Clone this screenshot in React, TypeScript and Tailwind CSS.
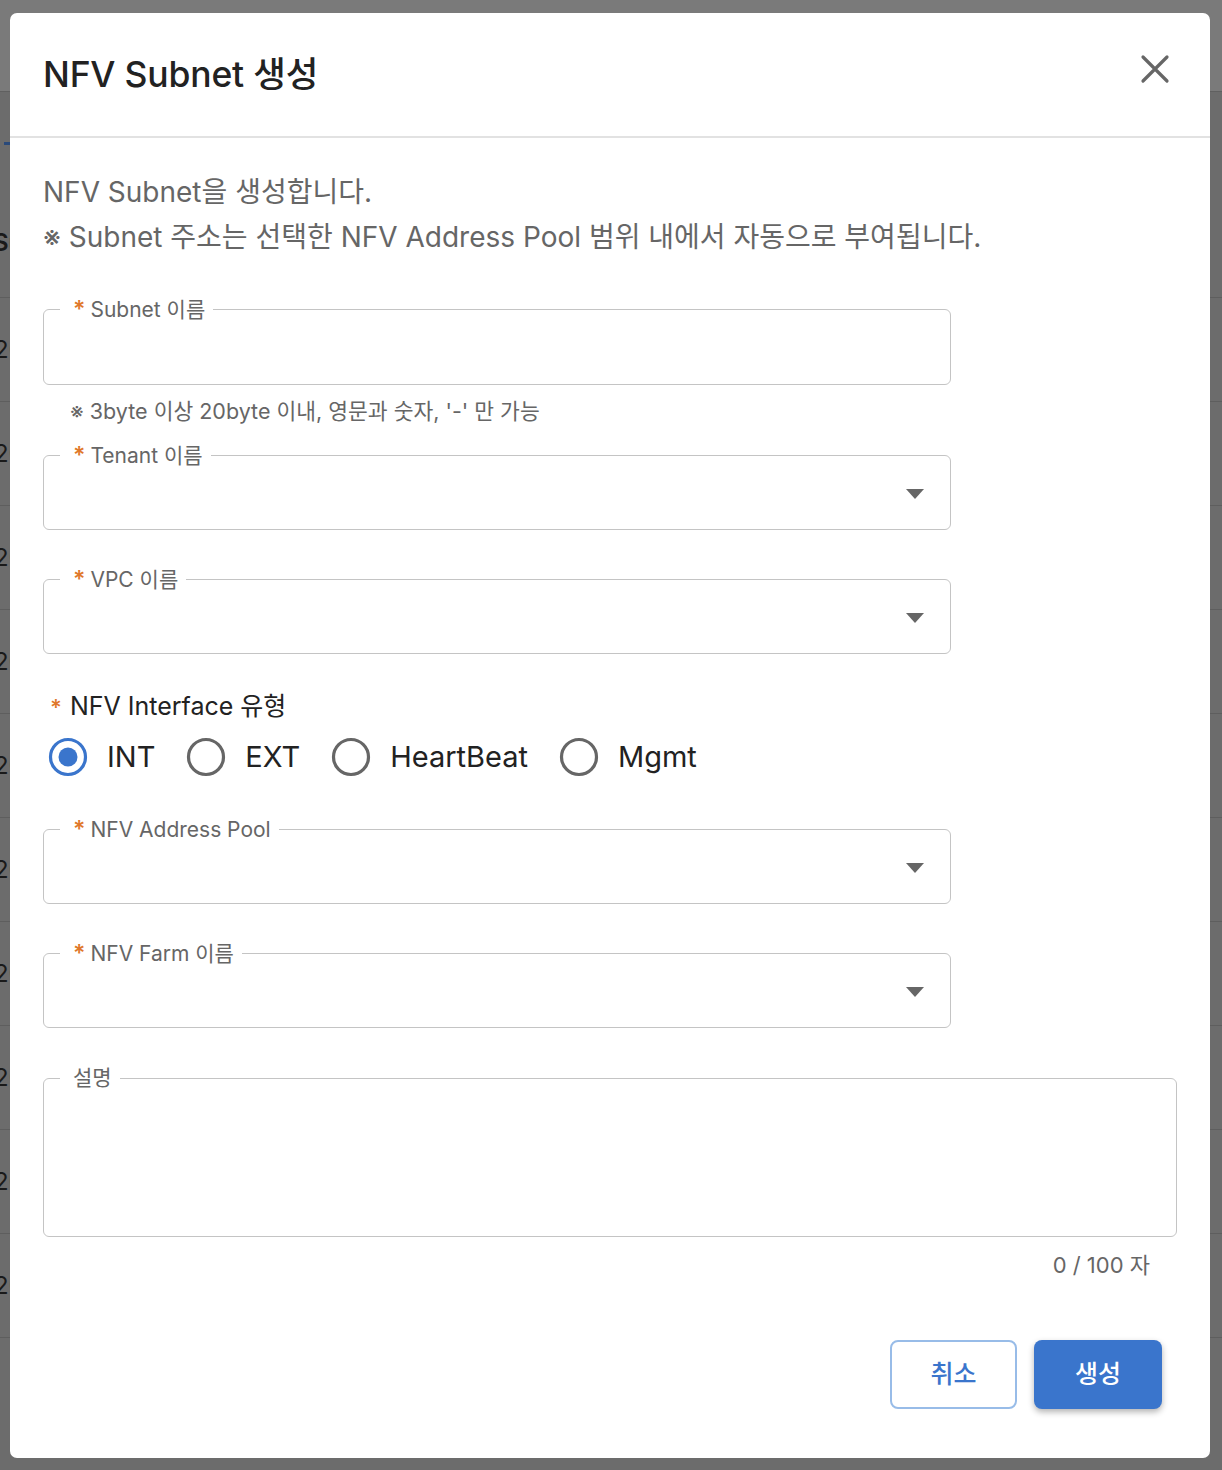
import React from "react";

const FONT = { fontFamily: 'Inter, "Noto Sans CJK KR", sans-serif' };

function Legend({ label, required = true }: { label: string; required?: boolean }) {
  return (
    <legend className="ml-[16px] pl-[13px] pr-[8px] text-[21px] leading-[24px] text-[#666666]">
      {required && <span className="text-[#e0782a] text-[23px] font-semibold mr-[5px]">*</span>}
      {label}
    </legend>
  );
}

function Arrow() {
  return (
    <svg width="18" height="10" viewBox="0 0 18 10">
      <path d="M0 0 L18 0 L9 10 Z" fill="#666666" />
    </svg>
  );
}

function SelectField({ label }: { label: string }) {
  return (
    <fieldset className="w-[908px] border border-[#c4c4c4] rounded-[6px]">
      <Legend label={label} />
      <div className="h-[61px] flex items-center justify-end pr-[26px] pb-[9px]">
        <Arrow />
      </div>
    </fieldset>
  );
}

function Radio({ label, checked }: { label: string; checked?: boolean }) {
  return (
    <div className="flex items-center">
      <svg width="40" height="40" viewBox="0 0 40 40">
        <circle cx="20" cy="20" r="17.5" fill="none" stroke={checked ? "#3a75cc" : "#666666"} strokeWidth="3.2" />
        {checked && <circle cx="20" cy="20" r="9.5" fill="#3a75cc" />}
      </svg>
      <span className="ml-[19px] text-[29px] leading-[34px] text-[#222222]">{label}</span>
    </div>
  );
}

const rows = [402, 507, 611, 715, 820, 924, 1028, 1132, 1236, 1340];

export default function App() {
  return (
    <div className="relative w-full h-[1470px] overflow-hidden bg-[#6c6c6c]" style={FONT}>
      {/* backdrop page */}
      <div className="h-[92px] bg-[#7a7a7a] border-b border-[#606060]" />
      <div className="h-[97px] pt-[50px]">
        <div className="ml-[4px] w-[10px] h-[3px] bg-[#2a4a7a]" />
      </div>
      <div className="h-[109px] flex items-center border-b border-[#5e5e5e]">
        <span className="ml-[-7px] text-[24px] font-semibold text-[#1a1a1a]">Su</span>
      </div>
      {rows.map((y) => (
        <div key={y} className="h-[104px] flex items-center border-b border-[#5e5e5e]">
          <span className="ml-[-6px] text-[24px] text-[#1a1a1a]">20</span>
        </div>
      ))}

      {/* modal */}
      <div className="absolute left-[10px] top-[13px] w-[1200px] h-[1445px] bg-white rounded-[7px] flex flex-col">
        <div className="h-[125px] shrink-0 flex items-center justify-between pl-[33px] pr-[40px] border-b-2 border-[#e2e2e2]">
          <h1 className="text-[35.5px] font-medium text-[#222222] tracking-[-0.2px]">NFV Subnet 생성</h1>
          <svg width="30" height="30" viewBox="0 0 30 30" className="mt-[-12px]">
            <path d="M3 3 L27 27 M27 3 L3 27" stroke="#666666" strokeWidth="3.2" strokeLinecap="round" />
          </svg>
        </div>

        <div className="flex flex-col pl-[33px] pr-[33px] pt-[32px]">
          <div className="text-[28px] leading-[45px] text-[#666666]">
            <p>NFV Subnet을 생성합니다.</p>
            <p>※ Subnet 주소는 선택한 NFV Address Pool 범위 내에서 자동으로 부여됩니다.</p>
          </div>

          <fieldset className="mt-[37px] w-[908px] border border-[#c4c4c4] rounded-[6px]">
            <Legend label="Subnet 이름" />
            <div className="h-[62px]" />
          </fieldset>
          <p className="mt-[14px] pl-[27px] text-[21.5px] leading-[24px] text-[#666666]">
            ※ 3byte 이상 20byte 이내, 영문과 숫자, '-' 만 가능
          </p>

          <div className="mt-[20px]">
            <SelectField label="Tenant 이름" />
          </div>
          <div className="mt-[37px]">
            <SelectField label="VPC 이름" />
          </div>

          <div className="mt-[37px] pl-[7px] text-[25px] leading-[30px] text-[#222222]">
            <span className="text-[#e0782a] text-[22px] font-semibold mr-[8px]">*</span>NFV Interface 유형
          </div>
          <div className="mt-[15px] pl-[5px] flex items-center gap-[31px]">
            <Radio label="INT" checked />
            <Radio label="EXT" />
            <Radio label="HeartBeat" />
            <Radio label="Mgmt" />
          </div>

          <div className="mt-[40px]">
            <SelectField label="NFV Address Pool" />
          </div>
          <div className="mt-[37px]">
            <SelectField label="NFV Farm 이름" />
          </div>

          <fieldset className="mt-[38px] w-full border border-[#c4c4c4] rounded-[6px]">
            <Legend label="설명" required={false} />
            <div className="h-[146px]" />
          </fieldset>
          <div className="mt-[16px] pr-[27px] text-right text-[22px] leading-[24px] text-[#666666]">0 / 100 자</div>

          <div className="mt-[63px] flex justify-end gap-[17px] pr-[15px]">
            <button className="w-[127px] h-[69px] rounded-[8px] border-2 border-[#98bce8] bg-white text-[25px] text-[#3a75cc] font-medium">
              취소
            </button>
            <button className="w-[128px] h-[69px] rounded-[8px] bg-[#3a75cc] text-white text-[25px] font-medium shadow-[0_3px_6px_rgba(0,0,0,0.3)]">
              생성
            </button>
          </div>
        </div>
      </div>
    </div>
  );
}
